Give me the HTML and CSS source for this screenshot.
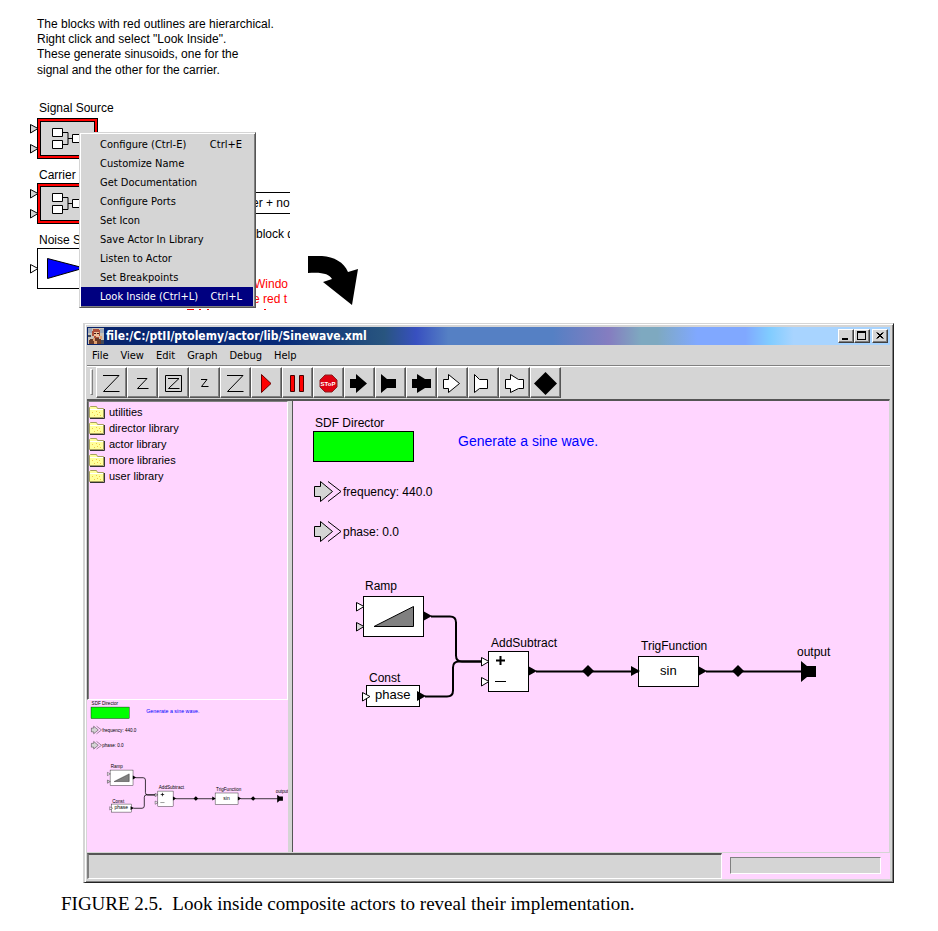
FILE: index.html
```html
<!DOCTYPE html>
<html lang="en">
<head>
<meta charset="utf-8">
<title>Look inside composite actors</title>
<link rel="stylesheet" href="styles.css">
</head>
<body>
<figure class="figure">
  <div class="scene">
    <svg class="model" width="290" height="310" viewBox="0 0 290 310" font-size="12">
      <defs>
        <g id="composite">
          <rect x=".5" y=".5" width="60" height="40" fill="#d5d5d5" stroke="#000"/>
          <rect x="2" y="2" width="57" height="37" fill="none" stroke="#f00" stroke-width="2"/>
          <rect x="3.5" y="3.5" width="54" height="34" fill="none" stroke="#000"/>
          <path d="M26 14.5h5v12h-5M31 20.5h5" fill="none" stroke="#000"/>
          <path d="M15.5 10.5h10v8h-10zM15.5 22.5h10v8h-10zM35.5 16.5h10v8h-10z" fill="#fff" stroke="#000"/>
        </g>
        <path id="port" d="M.5 .5L8 4.5L.5 9z" stroke="#000"/>
      </defs>
      <g class="sans">
        <text x="37" y="28">The blocks with red outlines are hierarchical.</text>
        <text x="37" y="43">Right click and select "Look Inside".</text>
        <text x="37" y="58">These generate sinusoids, one for the</text>
        <text x="37" y="74">signal and the other for the carrier.</text>
        <text x="39" y="112">Signal Source</text>
        <text x="39" y="179">Carrier</text>
        <text x="39" y="244">Noise S</text>
        <text x="256" y="238">block d</text>
        <g fill="#f00"><text x="254" y="288">Windo</text><text x="253" y="303">e red t</text></g>
      </g>
      <use href="#composite" x="37" y="118"/>
      <use href="#composite" x="37" y="183"/>
      <use href="#port" x="30" y="124" fill="#d5d5d5"/><use href="#port" x="30" y="144" fill="#d5d5d5"/>
      <use href="#port" x="30" y="189" fill="#d5d5d5"/><use href="#port" x="30" y="209" fill="#d5d5d5"/>
      <rect x="37.5" y="248.5" width="60" height="40" fill="#fff" stroke="#000"/>
      <path d="M47.5 258.5L84 268L47.5 278.5z" fill="#00f" stroke="#000"/>
      <use href="#port" x="30" y="264" fill="#fff"/>
      <rect x="150.5" y="192.5" width="160" height="21" fill="#fff" stroke="#000"/>
      <text class="sans" x="252" y="207">er + no</text>
      <path d="M187 309h7v1h-7zM199 309h2v1h-2zM207 309h2v1h-2zM264 309h2v1h-2z" fill="#f00"/>
    </svg>
    <svg class="arrow" width="52" height="52" viewBox="0 0 52 52">
      <path d="M0 0H14C26 1 36 6 40 16L50 13L44 49L15 26L24 23C21 18 15 16 0 17z"/>
    </svg>
    <ul class="context-menu">
      <li><button>Configure (Ctrl-E)<kbd>Ctrl+E</kbd></button></li>
      <li><button>Customize Name</button></li>
      <li><button>Get Documentation</button></li>
      <li><button>Configure Ports</button></li>
      <li><button>Set Icon</button></li>
      <li><button>Save Actor In Library</button></li>
      <li><button>Listen to Actor</button></li>
      <li><button>Set Breakpoints</button></li>
      <li><button class="selected">Look Inside (Ctrl+L)<kbd>Ctrl+L</kbd></button></li>
    </ul>
  </div>

  <section class="window">
    <header class="titlebar">
      <svg width="16" height="16" viewBox="0 0 16 16" shape-rendering="crispEdges">
        <path d="M0 0h16v16H0z" fill="#c9c3b8"/><path d="M0 0h4v5H0zM12 1h4v4h-4z" fill="#9fa9b8"/>
        <path d="M5 1h6v1h1v6h-1v2H6V8H4V3h1z" fill="#b0503a"/><path d="M6 4h5v5H8V8H6z" fill="#efc09a"/>
        <path d="M6 5h2v1H6zM9 5h2v1H9z" fill="#401818"/>
        <path d="M2 11h3v-1h6v1h2v1h1v4H1v-4h1z" fill="#6b3a28"/><path d="M5 10h2v3h2v3H6v-3H5zM12 8h2v3h-2z" fill="#e0a070"/>
        <path d="M0 7h3v2H0zM13 12h3v4h-3z" fill="#444a58"/>
      </svg>
      <h1>file:/C:/ptII/ptolemy/actor/lib/Sinewave.xml</h1>
      <div class="controls">
        <button aria-label="Minimize"><svg width="12" height="10"><path d="M2 7h6v2H2z"/></svg></button>
        <button aria-label="Maximize"><svg width="12" height="10"><path d="M1 0h9v9H1zM2 2v6h7V2z" fill-rule="evenodd"/></svg></button>
        <button aria-label="Close" class="close"><svg width="12" height="10"><path d="M2.5 1.5l6 6M3.5 1.5l6 6M8.5 1.5l-6 6M9.5 1.5l-6 6" stroke="#000"/></svg></button>
      </div>
    </header>
    <nav class="menubar">
      <button>File</button><button>View</button><button>Edit</button><button>Graph</button><button>Debug</button><button>Help</button>
    </nav>
    <div class="toolbar">
      <span class="grip"></span>
      <button aria-label="Zoom in"><svg width="28" height="28"><path class="line" d="M6 6.5h16L6.5 22.5h16"/></svg></button>
      <button aria-label="Zoom reset"><svg width="28" height="28"><path class="line" d="M9 9.5h10L9.5 19.5h11"/></svg></button>
      <button aria-label="Zoom fit"><svg width="28" height="28"><path class="line" d="M6.5 6.5h16v16h-16zM9 9.5h11L9.5 19.5h11"/></svg></button>
      <button aria-label="Zoom out"><svg width="28" height="28"><path class="line" d="M11 10.5h6L11.5 17.5h7"/></svg></button>
      <button aria-label="Full size"><svg width="28" height="28"><path class="line" d="M6 6.5h16L6.5 22.5h16"/></svg></button>
      <button aria-label="Run"><svg width="28" height="28"><path d="M9.5 5.5L19 14.5L9.5 23.5z" fill="#f00" stroke="#600"/></svg></button>
      <button aria-label="Pause"><svg width="28" height="28"><path d="M7.500 6.5h4v16h-4zM16.5 6.5h4v16h-4z" fill="#f00" stroke="#400"/></svg></button>
      <button aria-label="Stop"><svg width="28" height="28"><path d="M11 6h7l5 5v7l-5 5h-7l-5-5v-7z" fill="#e00010" stroke="#822"/><text x="14" y="17" font-size="6" font-weight="bold" text-anchor="middle" fill="#fff">SToP</text></svg></button>
      <button aria-label="Input port"><svg width="28" height="28"><path d="M5 10h6V5l11 9.5L11 24v-5H5z"/></svg></button>
      <button aria-label="Output port"><svg width="28" height="28"><path d="M5 5l6 5h9v9h-9l-6 5z"/></svg></button>
      <button aria-label="Input and output port"><svg width="28" height="28"><path d="M5 10h5V5l8 5h6v9h-6l-8 5v-5H5z"/></svg></button>
      <button aria-label="Input multiport"><svg width="28" height="28"><path class="open" d="M5.500 10.5h5V5.5l11 9l-11 9v-4h-5z"/></svg></button>
      <button aria-label="Output multiport"><svg width="28" height="28"><path class="open" d="M5.500 5.5l5 5h8v9h-8l-5 4z"/></svg></button>
      <button aria-label="Input and output multiport"><svg width="28" height="28"><path class="open" d="M5.500 10.5h5V5.5l8 5h5v9h-5l-8 4v-4h-5z"/></svg></button>
      <button aria-label="Relation"><svg width="28" height="28"><path d="M3 14.5L14.5 3L26 14.5L14.5 26z"/></svg></button>
    </div>
    <div class="workspace">
      <aside class="side">
        <ul class="tree">
          <li><svg class="folder" width="16" height="14"><use href="#folder"/></svg>utilities</li>
          <li><svg class="folder" width="16" height="14"><use href="#folder"/></svg>director library</li>
          <li><svg class="folder" width="16" height="14"><use href="#folder"/></svg>actor library</li>
          <li><svg class="folder" width="16" height="14"><use href="#folder"/></svg>more libraries</li>
          <li><svg class="folder" width="16" height="14"><use href="#folder"/></svg>user library</li>
        </ul>
        <svg class="overview" viewBox="10 11 526 398" preserveAspectRatio="xMinYMin"><use href="#graph"/></svg>
      </aside>
      <main class="canvas">
        <svg width="580" height="450" viewBox="0 0 580 450">
          <defs>
            <g id="folder">
              <path d="M.5 2.5l1-1h6l1 2h6v9H.5z" fill="#ffff9c" stroke="#a8a060"/>
              <path d="M1 4h13v1H1z" fill="#fff"/><path d="M3 7h1v1H3zM7 6h1v1H7zM10 7h1v1h-1zM5 10h1v1H5zM8 9h1v1H8zM11 10h1v1h-1z" fill="#f0c848"/>
              <path d="M1 13.5h14.5V4" fill="none" stroke="#333"/>
            </g>
            <path id="in" d="M.5 .5L8 4.5L.5 9z" stroke="#000"/>
            <path id="out" d="M0 0l9 5l-9 5z"/>
            <path id="relation" d="M0 -6l6 6l-6 6l-6-6z"/>
            <g id="parameter" stroke="#000"><path d="M.5 5.5h6v-5l12 10l-12 10v-5h-6z" fill="#d5d5d5"/><path d="M14 .5l13 10l-13 10" fill="none"/></g>
          </defs>
          <g id="graph" class="sans" font-size="12">
            <text x="22" y="25">SDF Director</text>
            <rect x="20.5" y="29.5" width="100" height="30" fill="#0f0" stroke="#000"/>
            <text x="165" y="44" font-size="14" fill="#00f">Generate a sine wave.</text>
            <use href="#parameter" x="21" y="79"/><text x="50" y="94">frequency: 440.0</text>
            <use href="#parameter" x="21" y="119"/><text x="50" y="134">phase: 0.0</text>
            <g fill="none" stroke="#000" stroke-width="2">
              <path d="M138 214.5h19q6 0 6 6v33q0 6 6 6h24"/><path d="M132 294.5h22q6 0 6-6v-23q0-6 6-6h27"/>
              <path d="M243 269.5h102M413 269.5h97"/>
            </g>
            <text x="72" y="188">Ramp</text>
            <rect x="70.5" y="194.5" width="60" height="40" fill="#fff" stroke="#000"/>
            <path d="M81 224.5L120.5 204.5v20z" fill="#808080" stroke="#000"/>
            <use href="#in" x="63" y="200" fill="#fff"/><use href="#in" x="63" y="220" fill="#d5d5d5"/><use href="#out" x="130" y="209"/>
            <text x="76" y="280">Const</text>
            <rect x="73.5" y="283.5" width="53" height="21" fill="#fff" stroke="#000"/>
            <text x="82" y="297" font-size="13">phase</text>
            <use href="#in" x="69" y="290" fill="#fff"/><use href="#out" x="124" y="289"/>
            <text x="198" y="245">AddSubtract</text>
            <rect x="195.5" y="249.5" width="40" height="40" fill="#fff" stroke="#000"/>
            <path d="M203 258.5h9M207.5 254v9" stroke="#000" stroke-width="2"/><path d="M202 279.5h11" stroke="#000"/>
            <use href="#in" x="188" y="255" fill="#fff"/><use href="#in" x="188" y="275" fill="#fff"/><use href="#out" x="235" y="264"/>
            <use href="#relation" x="295" y="269"/><use href="#relation" x="445" y="269"/>
            <text x="348" y="248">TrigFunction</text>
            <rect x="345.5" y="254.5" width="60" height="30" fill="#fff" stroke="#000"/>
            <text x="367" y="273" font-size="13">sin</text>
            <use href="#out" x="338" y="264"/><use href="#out" x="405" y="264"/>
            <text x="504" y="254">output</text>
            <path d="M508 259l6 5h9v11h-9l-6 5z"/>
          </g>
        </svg>
      </main>
    </div>
    <footer class="statusbar">
      <div class="status"></div>
      <div class="progress"></div>
    </footer>
  </section>
  <figcaption>FIGURE 2.5.&nbsp; Look inside composite actors to reveal their implementation.</figcaption>
</figure>
</body>
</html>
```
FILE: styles.css
```css
* { box-sizing: border-box; }
body { margin: 0; background: #fff; color: #000; }
svg { display: block; }
ul { list-style: none; margin: 0; padding: 0; }
button { border: 0; padding: 0; margin: 0; background: #d5d5d5; color: #000; font: inherit; }
.sans { font-family: "Liberation Sans", Arial, sans-serif; }
.figure { margin: 0; }
.scene { position: relative; display: flex; align-items: flex-end; gap: 18px; padding-bottom: 13px; }
.arrow { margin-bottom: 2px; }

.context-menu, .window { font-family: "DejaVu Sans Condensed", "DejaVu Sans", Tahoma, sans-serif; font-size: 11px; }
.context-menu {
  position: absolute; left: 79px; top: 132px; width: 177px; padding: 2px 2px 1px 1px;
  background: #d5d5d5; border: 1px solid; border-color: #d5d5d5 #555 #555 #d5d5d5;
  box-shadow: inset 1px 1px #fff, inset -1px -1px #808080;
}
.context-menu button { display: flex; justify-content: space-between; width: 100%; height: 19px; padding: 0 11px 0 19px; align-items: center; background: none; }
.context-menu kbd { font: inherit; }
.context-menu .selected { background: #000080; color: #fff; }

.window {
  margin: 0 44px 0 83px; padding: 2px; background: #d5d5d5;
  border: 2px solid; border-color: #d5d5d5 #222 #222 #d5d5d5;
  border-width: 1px 1px 1px 2px; padding: 3px 3px 3px 2px;
  box-shadow: inset 1px 1px #fff, inset -1px -1px #808080;
}
.titlebar {
  display: flex; align-items: center; height: 18px; padding: 0 2px 0 1px; gap: 2px; color: #fff;
  background: linear-gradient(90deg, #08246b 0, #082a78 24%, #28557f 37%, #3850c0 41%, #5580c4 45%, #5580c4 58%, #857dc0 65%, #7ea9c0 69%, #7ea9c0 71%, #80a8ff 76%, #80a8ff 82%, #80ccff 85%, #a8d4ff 88%);
}
.titlebar h1 { flex: 1; margin: 0; font-size: 12px; line-height: 18px; }
.controls { display: flex; }
.controls button { width: 16px; height: 14px; padding: 1px; border: 1px solid; border-color: #fff #404040 #404040 #fff; box-shadow: inset -1px -1px #808080; }
.controls .close { margin-left: 2px; }
.menubar { display: flex; gap: 12px; height: 20px; padding-left: 5px; }
.toolbar { display: flex; height: 34px; padding: 1px 0 0 3px; border-top: 1px solid #808080; box-shadow: inset 0 1px #fff; }
.toolbar .grip { width: 3px; height: 26px; margin: 2px 3px 0 0; border: 1px solid; border-color: #fff #808080 #808080 #fff; }
.toolbar button { width: 31px; height: 31px; border: 1px solid; border-color: #fff #555 #555 #fff; box-shadow: inset -1px -1px #808080; }
.toolbar svg { font-family: "Liberation Sans", sans-serif; }
.line { fill: none; stroke: #000; }
.open { fill: #fff; stroke: #000; }

.workspace { display: flex; background: #ffd5ff; border-top: 2px solid #555; border-right: 1px solid #d5d5d5; }
.side { display: flex; flex-direction: column; width: 206px; border-right: 1px solid #555; box-shadow: inset -4px 0 #d5d5d5; }
.tree { flex: 1; width: 201px; padding: 2px 0 0 1px; border: 1px solid; border-color: #808080 #fff #fff #555; box-shadow: inset 1px 0 #808080; font-family: "Liberation Sans", Arial, sans-serif; font-size: 11px; }
.tree li { display: flex; align-items: center; height: 16px; gap: 4px; }
.overview { width: 201px; height: 152px; }
.canvas { flex: 1; min-width: 0; padding-top: 1px; overflow: hidden; }
.statusbar { display: flex; align-items: center; gap: 8px; height: 27px; background: #ffd5ff; border-top: 1px solid #d5d5d5; }
.status { flex: 1; height: 26px; background: #d5d5d5; border: solid; border-width: 2px 1px 1px 2px; border-color: #555 #fff #fff #808080; }
.progress { width: 151px; height: 17px; margin: 0 9px 2px 0; background: #d5d5d5; border: 1px solid; border-color: #808080 #fff #fff #808080; }
figcaption { margin: 10px 0 0 61px; font-family: "Liberation Serif", "Times New Roman", serif; font-size: 19px; line-height: 22px; }
```
